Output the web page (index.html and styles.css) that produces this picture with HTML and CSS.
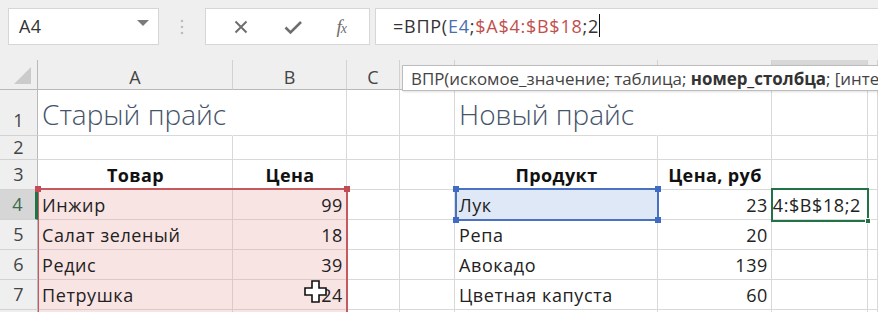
FILE: index.html
```html
<!DOCTYPE html>
<html lang="ru">
<head>
<meta charset="utf-8">
<title>Excel ВПР</title>
<link rel="stylesheet" href="styles.css">
</head>
<body>
<div class="app">
  <div class="toolbar">
    <div class="namebox">
      <span class="namebox-text">A4</span>
      <svg class="namebox-arrow" width="12" height="7" viewBox="0 0 12 7"><path d="M0 0 H12 L6 6 Z" fill="#7a7a7a"/></svg>
    </div>
    <div class="sep">
      <svg width="4" height="16" viewBox="0 0 4 16"><circle cx="2" cy="2" r="1.3" fill="#bdbdbd"/><circle cx="2" cy="8" r="1.3" fill="#bdbdbd"/><circle cx="2" cy="14" r="1.3" fill="#bdbdbd"/></svg>
    </div>
    <div class="btns">
      <svg class="ico" width="16" height="16" viewBox="0 0 16 16"><path d="M2.5 2.5 L13.5 13.5 M13.5 2.5 L2.5 13.5" stroke="#6e6e6e" stroke-width="2" fill="none"/></svg>
      <svg class="ico" width="20" height="16" viewBox="0 0 20 16"><path d="M2.5 8.5 L7.5 13.5 L18 3" stroke="#6e6e6e" stroke-width="2.6" fill="none"/></svg>
      <span class="fx">f<span class="fx-x">x</span></span>
    </div>
    <div class="formula"><span>=ВПР(</span><span class="ref-blue">E4</span><span>;</span><span class="ref-red">$A$4:$B$18</span><span>;2</span><span class="caret"></span></div>
  </div>

  <div class="sheet">
    <div class="grid">
      <!-- header row -->
      <div class="hd corner"><svg width="17" height="17" viewBox="0 0 17 17"><path d="M17 0 V17 H0 Z" fill="#cbcbcb"/></svg></div>
      <div class="hd col">A</div>
      <div class="hd col">B</div>
      <div class="hd col">C</div>
      <div class="hd col"></div>
      <div class="hd col"></div>
      <div class="hd col"></div>
      <div class="hd col col-active"></div>
      <div class="hd col"></div>

      <!-- row 1 -->
      <div class="hd row">1</div>
      <div class="c title">Старый прайс</div>
      <div class="c"></div>
      <div class="c"></div>
      <div class="c"></div>
      <div class="c title">Новый прайс</div>
      <div class="c"></div>
      <div class="c"></div>
      <div class="c"></div>

      <!-- row 2 -->
      <div class="hd row row-short">2</div>
      <div class="c"></div>
      <div class="c"></div>
      <div class="c"></div>
      <div class="c"></div>
      <div class="c"></div>
      <div class="c"></div>
      <div class="c"></div>
      <div class="c"></div>

      <!-- row 3 -->
      <div class="hd row">3</div>
      <div class="c th">Товар</div>
      <div class="c th">Цена</div>
      <div class="c"></div>
      <div class="c"></div>
      <div class="c th">Продукт</div>
      <div class="c th">Цена, руб</div>
      <div class="c"></div>
      <div class="c"></div>

      <!-- row 4 -->
      <div class="hd row row-active">4</div>
      <div class="c pink">Инжир</div>
      <div class="c pink num">99</div>
      <div class="c"></div>
      <div class="c"></div>
      <div class="c blue">Лук</div>
      <div class="c num">23</div>
      <div class="c edit"><span>4:$B$18;2</span></div>
      <div class="c"></div>

      <!-- row 5 -->
      <div class="hd row">5</div>
      <div class="c pink">Салат зеленый</div>
      <div class="c pink num">18</div>
      <div class="c"></div>
      <div class="c"></div>
      <div class="c">Репа</div>
      <div class="c num">20</div>
      <div class="c"></div>
      <div class="c"></div>

      <!-- row 6 -->
      <div class="hd row">6</div>
      <div class="c pink">Редис</div>
      <div class="c pink num">39</div>
      <div class="c"></div>
      <div class="c"></div>
      <div class="c">Авокадо</div>
      <div class="c num">139</div>
      <div class="c"></div>
      <div class="c"></div>

      <!-- row 7 -->
      <div class="hd row">7</div>
      <div class="c pink">Петрушка</div>
      <div class="c pink num">24</div>
      <div class="c"></div>
      <div class="c"></div>
      <div class="c">Цветная капуста</div>
      <div class="c num">60</div>
      <div class="c"></div>
      <div class="c"></div>

      <!-- row 8 (cut off at the bottom edge) -->
      <div class="hd row"></div>
      <div class="c pink"></div>
      <div class="c pink"></div>
      <div class="c"></div>
      <div class="c"></div>
      <div class="c"></div>
      <div class="c"></div>
      <div class="c"></div>
      <div class="c"></div>
    </div>

    <!-- overlays -->
    <div class="range-red"><i class="h h-tl"></i><i class="h h-tr"></i></div>
    <div class="range-blue"><i class="h h-tl"></i><i class="h h-tr"></i><i class="h h-bl"></i><i class="h h-br"></i></div>
    <div class="active-cell"><i class="fill-handle"></i></div>
    <div class="tooltip">ВПР(искомое_значение; таблица; <b>номер_столбца</b>; [интервальный_просмотр])</div>
    <svg class="cursor" width="23" height="23" viewBox="0 0 23 23"><path d="M8 1 H15 V8 H22 V15 H15 V22 H8 V15 H1 V8 H8 Z" fill="#fff" stroke="#111" stroke-width="1.6"/></svg>
  </div>
</div>
</body>
</html>
```

FILE: styles.css
```css
* { box-sizing: border-box; }
html, body { margin: 0; padding: 0; }
body {
  width: 878px;
  height: 312px;
  overflow: hidden;
  background: #f0f0f0;
  font-family: "Open Sans", "Noto Sans", sans-serif;
}
.app { width: 878px; height: 312px; overflow: hidden; }

/* toolbar */
.toolbar {
  height: 60px;
  display: flex;
  align-items: flex-start;
  padding: 8px 0 0 8px;
  background: #efefef;
}
.namebox {
  width: 151px;
  height: 37px;
  background: #fff;
  border: 1px solid #d6d6d6;
  display: flex;
  align-items: center;
  justify-content: space-between;
  padding: 0 9px 2px 10px;
}
.namebox-text { font-size: 18px; color: #333; letter-spacing: 0.3px; }
.namebox-arrow { margin-top: -4px; }
.sep {
  width: 46px;
  height: 37px;
  display: flex;
  align-items: center;
  justify-content: center;
}
.btns {
  width: 165px;
  height: 37px;
  background: #fff;
  border: 1px solid #d6d6d6;
  display: flex;
  align-items: center;
  justify-content: space-around;
  padding: 0 6px 0 10px;
}
.fx {
  font-family: "Liberation Serif", serif;
  font-style: italic;
  font-size: 19px;
  color: #6e6e6e;
  letter-spacing: -1px;
}
.fx-x { font-size: 14px; }
.formula {
  flex: 1;
  height: 37px;
  margin-left: 5px;
  background: #fff;
  border: 1px solid #d6d6d6;
  border-right: none;
  display: flex;
  align-items: center;
  padding: 0 0 2px 17px;
  font-size: 18px;
  letter-spacing: 0.75px;
  color: #333;
  white-space: nowrap;
}
.ref-blue { color: #4a6fae; }
.ref-red { color: #c0504d; }
.caret { width: 1px; height: 23px; background: #111; margin-left: 0; }

/* sheet */
.sheet { position: relative; height: 252px; background: #fff; }
.grid {
  display: grid;
  grid-template-columns: 38px 195px 114px 53px 55px 203px 114px 96px 10px;
  grid-template-rows: 30px 46px 24px 30px 30px 30px 30px 30px 30px;
  font-family: "Open Sans", "Noto Sans", sans-serif;
}
.hd {
  background: #efefef;
  color: #444;
  font-size: 18px;
  display: flex;
  justify-content: center;
  overflow: hidden;
}
.corner {
  align-items: flex-end;
  justify-content: flex-end;
  padding: 0 6px 5px 0;
  border-right: 1px solid #b9b9b9;
  border-bottom: 1px solid #b9b9b9;
}
.col {
  align-items: flex-end;
  padding-bottom: 0;
  border-right: 1px solid #d2d2d2;
  border-bottom: 1px solid #b9b9b9;
}
.col-active { background: #d8d8d8; border-bottom: 2px solid #217346; }
.row {
  align-items: flex-end;
  padding-bottom: 3px;
  border-right: 1px solid #b9b9b9;
  border-bottom: 1px solid #d2d2d2;
}
.row-short { padding-bottom: 0; }
.row-active { background: #d6d6d6; color: #3c6a4f; border-right: 3px solid #217346; }

.c {
  border-right: 1px solid #d9d9d9;
  border-bottom: 1px solid #d9d9d9;
  font-size: 18px;
  letter-spacing: 0.6px;
  color: #222;
  display: flex;
  align-items: flex-end;
  padding: 0 3px 2px 4px;
  white-space: nowrap;
  overflow: visible;
  min-width: 0;
}
.title {
  font-size: 28px;
  letter-spacing: 0;
  font-weight: 300;
  color: #44546a;
  padding-bottom: 2px;
  position: relative;
  z-index: 1;
  border-right-color: transparent;
}
.th { font-weight: 700; justify-content: center; color: #111; letter-spacing: 0.4px; }
.num { justify-content: flex-end; }
.pink { background: #f9e4e4; border-color: #dccaca; }
.blue { background: #dfe8f6; }
.edit { justify-content: flex-end; overflow: hidden; padding-right: 6px; }

/* overlays */
.range-red {
  position: absolute;
  left: 38px;
  top: 128px;
  width: 310px;
  height: 130px;
  border-top: 2px solid #c55a5e;
  border-right: 2px solid #c55a5e;
  border-left: 1px solid #c55a5e;
}
.range-blue {
  position: absolute;
  left: 455px;
  top: 128px;
  width: 204px;
  height: 33px;
  border: 2px solid #4a72c0;
}
.h { position: absolute; width: 6px; height: 6px; }
.range-red .h { background: #c24b55; }
.range-blue .h { background: #3f6bc2; }
.h-tl { left: -4px; top: -4px; }
.h-tr { right: -4px; top: -4px; }
.h-bl { left: -4px; bottom: -4px; }
.h-br { right: -4px; bottom: -4px; }
.active-cell {
  position: absolute;
  left: 771px;
  top: 128px;
  width: 98px;
  height: 34px;
  border: 2px solid #217346;
}
.fill-handle {
  position: absolute;
  right: -4px;
  bottom: -4px;
  width: 6px;
  height: 6px;
  background: #217346;
  border: 1px solid #fff;
}
.tooltip {
  position: absolute;
  left: 402px;
  top: 5px;
  width: 600px;
  height: 26px;
  background: #fff;
  border: 1px solid #bdbdbd;
  box-shadow: 1px 1px 2px rgba(0,0,0,0.12);
  font-size: 16.9px;
  color: #444;
  padding: 1px 0 0 8px;
  white-space: nowrap;
  z-index: 5;
}
.tooltip b { font-weight: 700; color: #333; }
.cursor { position: absolute; left: 304px; top: 220px; z-index: 6; }
```
